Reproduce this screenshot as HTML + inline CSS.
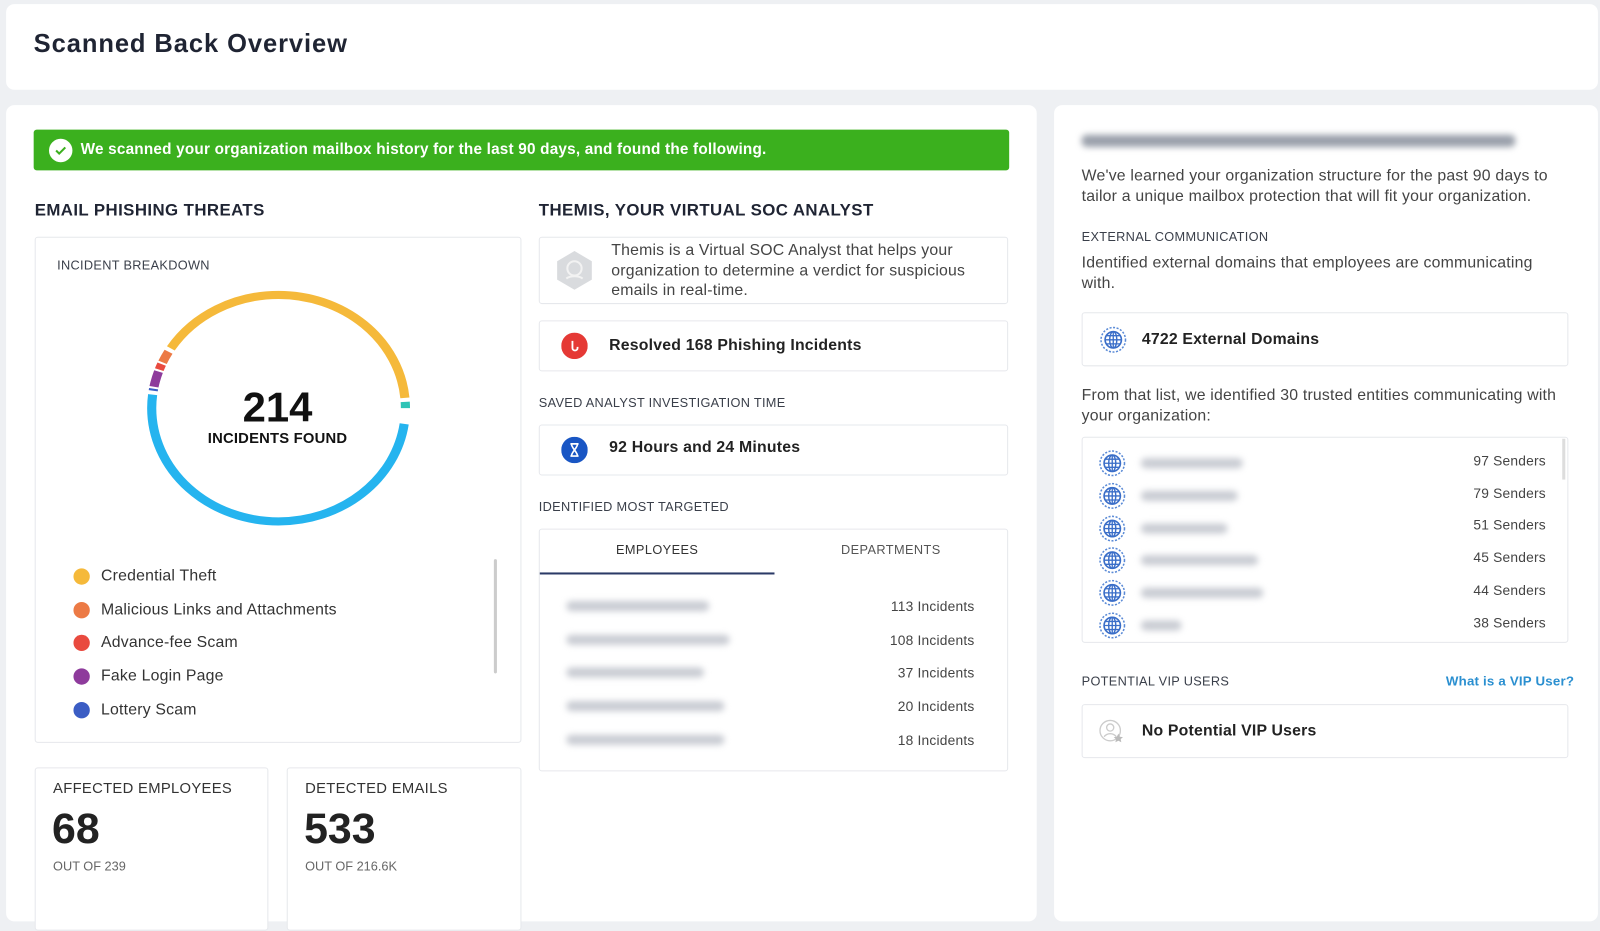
<!DOCTYPE html>
<html><head><meta charset="utf-8"><style>
*{box-sizing:border-box;margin:0;padding:0}
body{width:1600px;height:898px;background:#eef0f3;font-family:"Liberation Sans",sans-serif;color:#222;position:relative;overflow:hidden}
#w{position:absolute;left:0;top:0;width:1568px;height:880px;transform:scale(1.0204);transform-origin:0 0}
.a{position:absolute;white-space:nowrap}
.card{position:absolute;background:#fff;border-radius:8px}
.box{position:absolute;background:#fff;border:1px solid #e6e8ec;border-radius:3px}
.h{font-weight:700;font-size:16.5px;color:#1f2433;letter-spacing:.4px}
.sm{font-size:12.5px;color:#3a3f4a;letter-spacing:.3px}
.t{font-size:15.5px;color:#333;letter-spacing:.2px}
.b{font-weight:700;font-size:15.5px;color:#222;letter-spacing:.2px}
.blur{position:absolute;height:10px;border-radius:5px;background:#c9ccd3;filter:blur(3px)}
.dot{position:absolute;width:16px;height:16px;border-radius:50%}
.num{position:absolute;font-size:13.5px;color:#444;text-align:right;letter-spacing:.2px}
.g{position:absolute;width:26px;height:26px}
</style></head><body>
<svg width="0" height="0" style="position:absolute"><defs>
<symbol id="glb" viewBox="0 0 26 26"><circle cx="13" cy="13" r="12" fill="none" stroke="#5a8ad6" stroke-width="1.5" stroke-dasharray="2 1.5"/><circle cx="13" cy="13" r="8" fill="none" stroke="#3a6ec8" stroke-width="1.6"/><ellipse cx="13" cy="13" rx="3.5" ry="8" fill="none" stroke="#3a6ec8" stroke-width="1.4"/><path d="M5 13h16M6 9h14M6 17h14M13 5v16" stroke="#3a6ec8" stroke-width="1.3"/></symbol>
</defs></svg>
<div id="w">
<div class="card" style="left:6px;top:4px;width:1560px;height:84px;"></div>
<div class="a" style="left:33px;top:29px;font-size:25px;font-weight:700;color:#1f2433;letter-spacing:.9px">Scanned Back Overview</div>

<div class="card" style="left:6px;top:103px;width:1010px;height:800px;"></div>
<div class="card" style="left:1033px;top:103px;width:533px;height:800px;"></div>

<div class="a" style="left:33px;top:127px;width:956px;height:40px;background:#3bb01e;border-radius:3px"></div>
<div class="a" style="left:48px;top:136px;width:23px;height:23px;border-radius:50%;background:#fff"><svg width="23" height="23"><path d="M7 11.5l3 3 6-6" stroke="#3bb01e" stroke-width="2" fill="none"/></svg></div>
<div class="a" style="left:79px;top:138px;color:#fff;font-weight:700;font-size:15px;letter-spacing:.2px">We scanned your organization mailbox history for the last 90 days, and found the following.</div>

<div class="a h" style="left:34px;top:197px">EMAIL PHISHING THREATS</div>
<div class="a h" style="left:528px;top:197px">THEMIS, YOUR VIRTUAL SOC ANALYST</div>

<div class="box" style="left:34px;top:232px;width:477px;height:496px"></div>
<div class="a sm" style="left:56px;top:253px">INCIDENT BREAKDOWN</div>
<svg class="a" style="left:140px;top:283px" width="266" height="234" viewBox="0 0 266 234">
<g transform="translate(133,117) scale(1.12,1)">
<circle r="111" fill="none" stroke="#25b4ef" stroke-width="8" pathLength="360" stroke-dasharray="179 360" stroke-dashoffset="-8"/>
<circle r="111" fill="none" stroke="#3b5dc4" stroke-width="8" pathLength="360" stroke-dasharray="1 360" stroke-dashoffset="-189"/>
<circle r="111" fill="none" stroke="#8e3b9c" stroke-width="8" pathLength="360" stroke-dasharray="8 360" stroke-dashoffset="-191"/>
<circle r="111" fill="none" stroke="#e94a3f" stroke-width="8" pathLength="360" stroke-dasharray="3 360" stroke-dashoffset="-200"/>
<circle r="111" fill="none" stroke="#ec7a45" stroke-width="8" pathLength="360" stroke-dasharray="6 360" stroke-dashoffset="-204"/>
<circle r="111" fill="none" stroke="#f5b93a" stroke-width="8" pathLength="360" stroke-dasharray="143 360" stroke-dashoffset="-212"/>
<circle r="111" fill="none" stroke="#2ec4b6" stroke-width="8" pathLength="360" stroke-dasharray="5 360" stroke-dashoffset="-357"/>
</g></svg>
<div class="a" style="left:172px;top:376px;width:200px;text-align:center;font-size:41px;font-weight:700;color:#111">214</div>
<div class="a" style="left:172px;top:422px;width:200px;text-align:center;font-size:14.5px;font-weight:700;color:#111;letter-spacing:.2px">INCIDENTS FOUND</div>
<div class="a" style="left:484px;top:548px;width:3px;height:112px;background:#ccc;border-radius:2px"></div>
<div class="dot" style="left:72px;top:557px;background:#f5b93a"></div><div class="a t" style="left:99px;top:556px">Credential Theft</div>
<div class="dot" style="left:72px;top:590px;background:#ec7a45"></div><div class="a t" style="left:99px;top:589px">Malicious Links and Attachments</div>
<div class="dot" style="left:72px;top:622px;background:#e94a3f"></div><div class="a t" style="left:99px;top:621px">Advance-fee Scam</div>
<div class="dot" style="left:72px;top:655px;background:#8e3b9c"></div><div class="a t" style="left:99px;top:654px">Fake Login Page</div>
<div class="dot" style="left:72px;top:688px;background:#3b5dc4"></div><div class="a t" style="left:99px;top:687px">Lottery Scam</div>

<div class="box" style="left:34px;top:752px;width:229px;height:160px"></div>
<div class="a" style="left:52px;top:765px;font-size:14.5px;color:#333;letter-spacing:.3px">AFFECTED EMPLOYEES</div>
<div class="a" style="left:51px;top:788px;font-size:42px;font-weight:700;color:#222">68</div>
<div class="a" style="left:52px;top:842px;font-size:12.5px;color:#666">OUT OF 239</div>
<div class="box" style="left:281px;top:752px;width:230px;height:160px"></div>
<div class="a" style="left:299px;top:765px;font-size:14.5px;color:#333;letter-spacing:.3px">DETECTED EMAILS</div>
<div class="a" style="left:298px;top:788px;font-size:42px;font-weight:700;color:#222">533</div>
<div class="a" style="left:299px;top:842px;font-size:12.5px;color:#666">OUT OF 216.6K</div>

<div class="box" style="left:528px;top:232px;width:460px;height:66px"></div>
<svg class="a" style="left:543px;top:245px" width="40" height="40"><path d="M20 1l17 10v18L20 39 3 29V11z" fill="#d9dbde"/><circle cx="20" cy="18" r="7" fill="none" stroke="#f2f2f2" stroke-width="2"/><path d="M12 28c4-3 12-3 16 0" stroke="#f2f2f2" stroke-width="2" fill="none"/></svg>
<div class="a t" style="left:599px;top:236px;line-height:19.5px;color:#444">Themis is a Virtual SOC Analyst that helps your<br>organization to determine a verdict for suspicious<br>emails in real-time.</div>
<div class="box" style="left:528px;top:314px;width:460px;height:50px"></div>
<svg class="a" style="left:550px;top:326px" width="26" height="26"><circle cx="13" cy="13" r="13" fill="#e53935"/><path d="M11 8v7a2.5 2.5 0 0 0 5 0v-1" stroke="#fff" stroke-width="1.8" fill="none"/></svg>
<div class="a b" style="left:597px;top:330px">Resolved 168 Phishing Incidents</div>
<div class="a sm" style="left:528px;top:388px">SAVED ANALYST INVESTIGATION TIME</div>
<div class="box" style="left:528px;top:416px;width:460px;height:50px"></div>
<svg class="a" style="left:550px;top:428px" width="26" height="26"><circle cx="13" cy="13" r="13" fill="#1956c4"/><path d="M9 7h8M9 19h8M10 7c0 4 6 8 6 12M16 7c0 4-6 8-6 12" stroke="#fff" stroke-width="1.6" fill="none"/></svg>
<div class="a b" style="left:597px;top:430px">92 Hours and 24 Minutes</div>
<div class="a sm" style="left:528px;top:490px">IDENTIFIED MOST TARGETED</div>
<div class="box" style="left:528px;top:518px;width:460px;height:238px"></div>
<div class="a" style="left:529px;top:532px;width:230px;text-align:center;font-size:12.5px;color:#333;letter-spacing:.4px">EMPLOYEES</div>
<div class="a" style="left:758px;top:532px;width:230px;text-align:center;font-size:12.5px;color:#555;letter-spacing:.4px">DEPARTMENTS</div>
<div class="a" style="left:529px;top:561px;width:230px;height:2px;background:#2b3a67"></div>
<div class="blur" style="left:555px;top:589px;width:140px"></div><div class="num" style="left:835px;top:587px;width:120px">113 Incidents</div>
<div class="blur" style="left:555px;top:622px;width:160px"></div><div class="num" style="left:835px;top:620px;width:120px">108 Incidents</div>
<div class="blur" style="left:555px;top:654px;width:135px"></div><div class="num" style="left:835px;top:652px;width:120px">37 Incidents</div>
<div class="blur" style="left:555px;top:687px;width:155px"></div><div class="num" style="left:835px;top:685px;width:120px">20 Incidents</div>
<div class="blur" style="left:555px;top:720px;width:155px"></div><div class="num" style="left:835px;top:718px;width:120px">18 Incidents</div>

<div class="blur" style="left:1060px;top:132px;width:425px;height:12px;background:#9aa0ab"></div>
<div class="a t" style="left:1060px;top:163px;line-height:19.5px;color:#444">We've learned your organization structure for the past 90 days to<br>tailor a unique mailbox protection that will fit your organization.</div>
<div class="a sm" style="left:1060px;top:225px">EXTERNAL COMMUNICATION</div>
<div class="a t" style="left:1060px;top:248px;line-height:19.5px;color:#444">Identified external domains that employees are communicating<br>with.</div>
<div class="box" style="left:1060px;top:306px;width:477px;height:53px"></div>
<svg class="g" style="left:1078px;top:320px"><use href="#glb"/></svg>
<div class="a b" style="left:1119px;top:324px">4722 External Domains</div>
<div class="a t" style="left:1060px;top:378px;line-height:19.5px;color:#444">From that list, we identified 30 trusted entities communicating with<br>your organization:</div>
<div class="box" style="left:1060px;top:428px;width:477px;height:202px"></div>
<div class="a" style="left:1531px;top:430px;width:3px;height:40px;background:#ddd"></div>
<svg class="g" style="left:1077px;top:441px"><use href="#glb"/></svg>
<svg class="g" style="left:1077px;top:473px"><use href="#glb"/></svg>
<svg class="g" style="left:1077px;top:505px"><use href="#glb"/></svg>
<svg class="g" style="left:1077px;top:536px"><use href="#glb"/></svg>
<svg class="g" style="left:1077px;top:568px"><use href="#glb"/></svg>
<svg class="g" style="left:1077px;top:600px"><use href="#glb"/></svg>
<div class="blur" style="left:1118px;top:449px;width:100px"></div>
<div class="blur" style="left:1118px;top:481px;width:95px"></div>
<div class="blur" style="left:1118px;top:513px;width:85px"></div>
<div class="blur" style="left:1118px;top:544px;width:115px"></div>
<div class="blur" style="left:1118px;top:576px;width:120px"></div>
<div class="blur" style="left:1118px;top:608px;width:40px"></div>
<div class="num" style="left:1395px;top:436px;width:120px;line-height:31.7px">97 Senders<br>79 Senders<br>51 Senders<br>45 Senders<br>44 Senders<br>38 Senders</div>
<div class="a sm" style="left:1060px;top:661px">POTENTIAL VIP USERS</div>
<div class="a" style="left:1417px;top:660px;font-size:13px;font-weight:700;color:#2a8fd0;letter-spacing:.2px">What is a VIP User?</div>
<div class="box" style="left:1060px;top:690px;width:477px;height:53px"></div>
<svg class="a" style="left:1077px;top:705px" width="26" height="26"><circle cx="11" cy="11" r="10" fill="none" stroke="#ccc" stroke-width="1.3"/><circle cx="11" cy="8" r="3.5" fill="none" stroke="#ccc" stroke-width="1.3"/><path d="M5 17c3-4 9-4 12 0" stroke="#ccc" stroke-width="1.3" fill="none"/><path d="M19 14l1.5 3 3 .4-2.2 2 .6 3-2.9-1.5-2.9 1.5.6-3-2.2-2 3-.4z" fill="#bbb"/></svg>
<div class="a b" style="left:1119px;top:708px">No Potential VIP Users</div>
</div>
</body></html>
